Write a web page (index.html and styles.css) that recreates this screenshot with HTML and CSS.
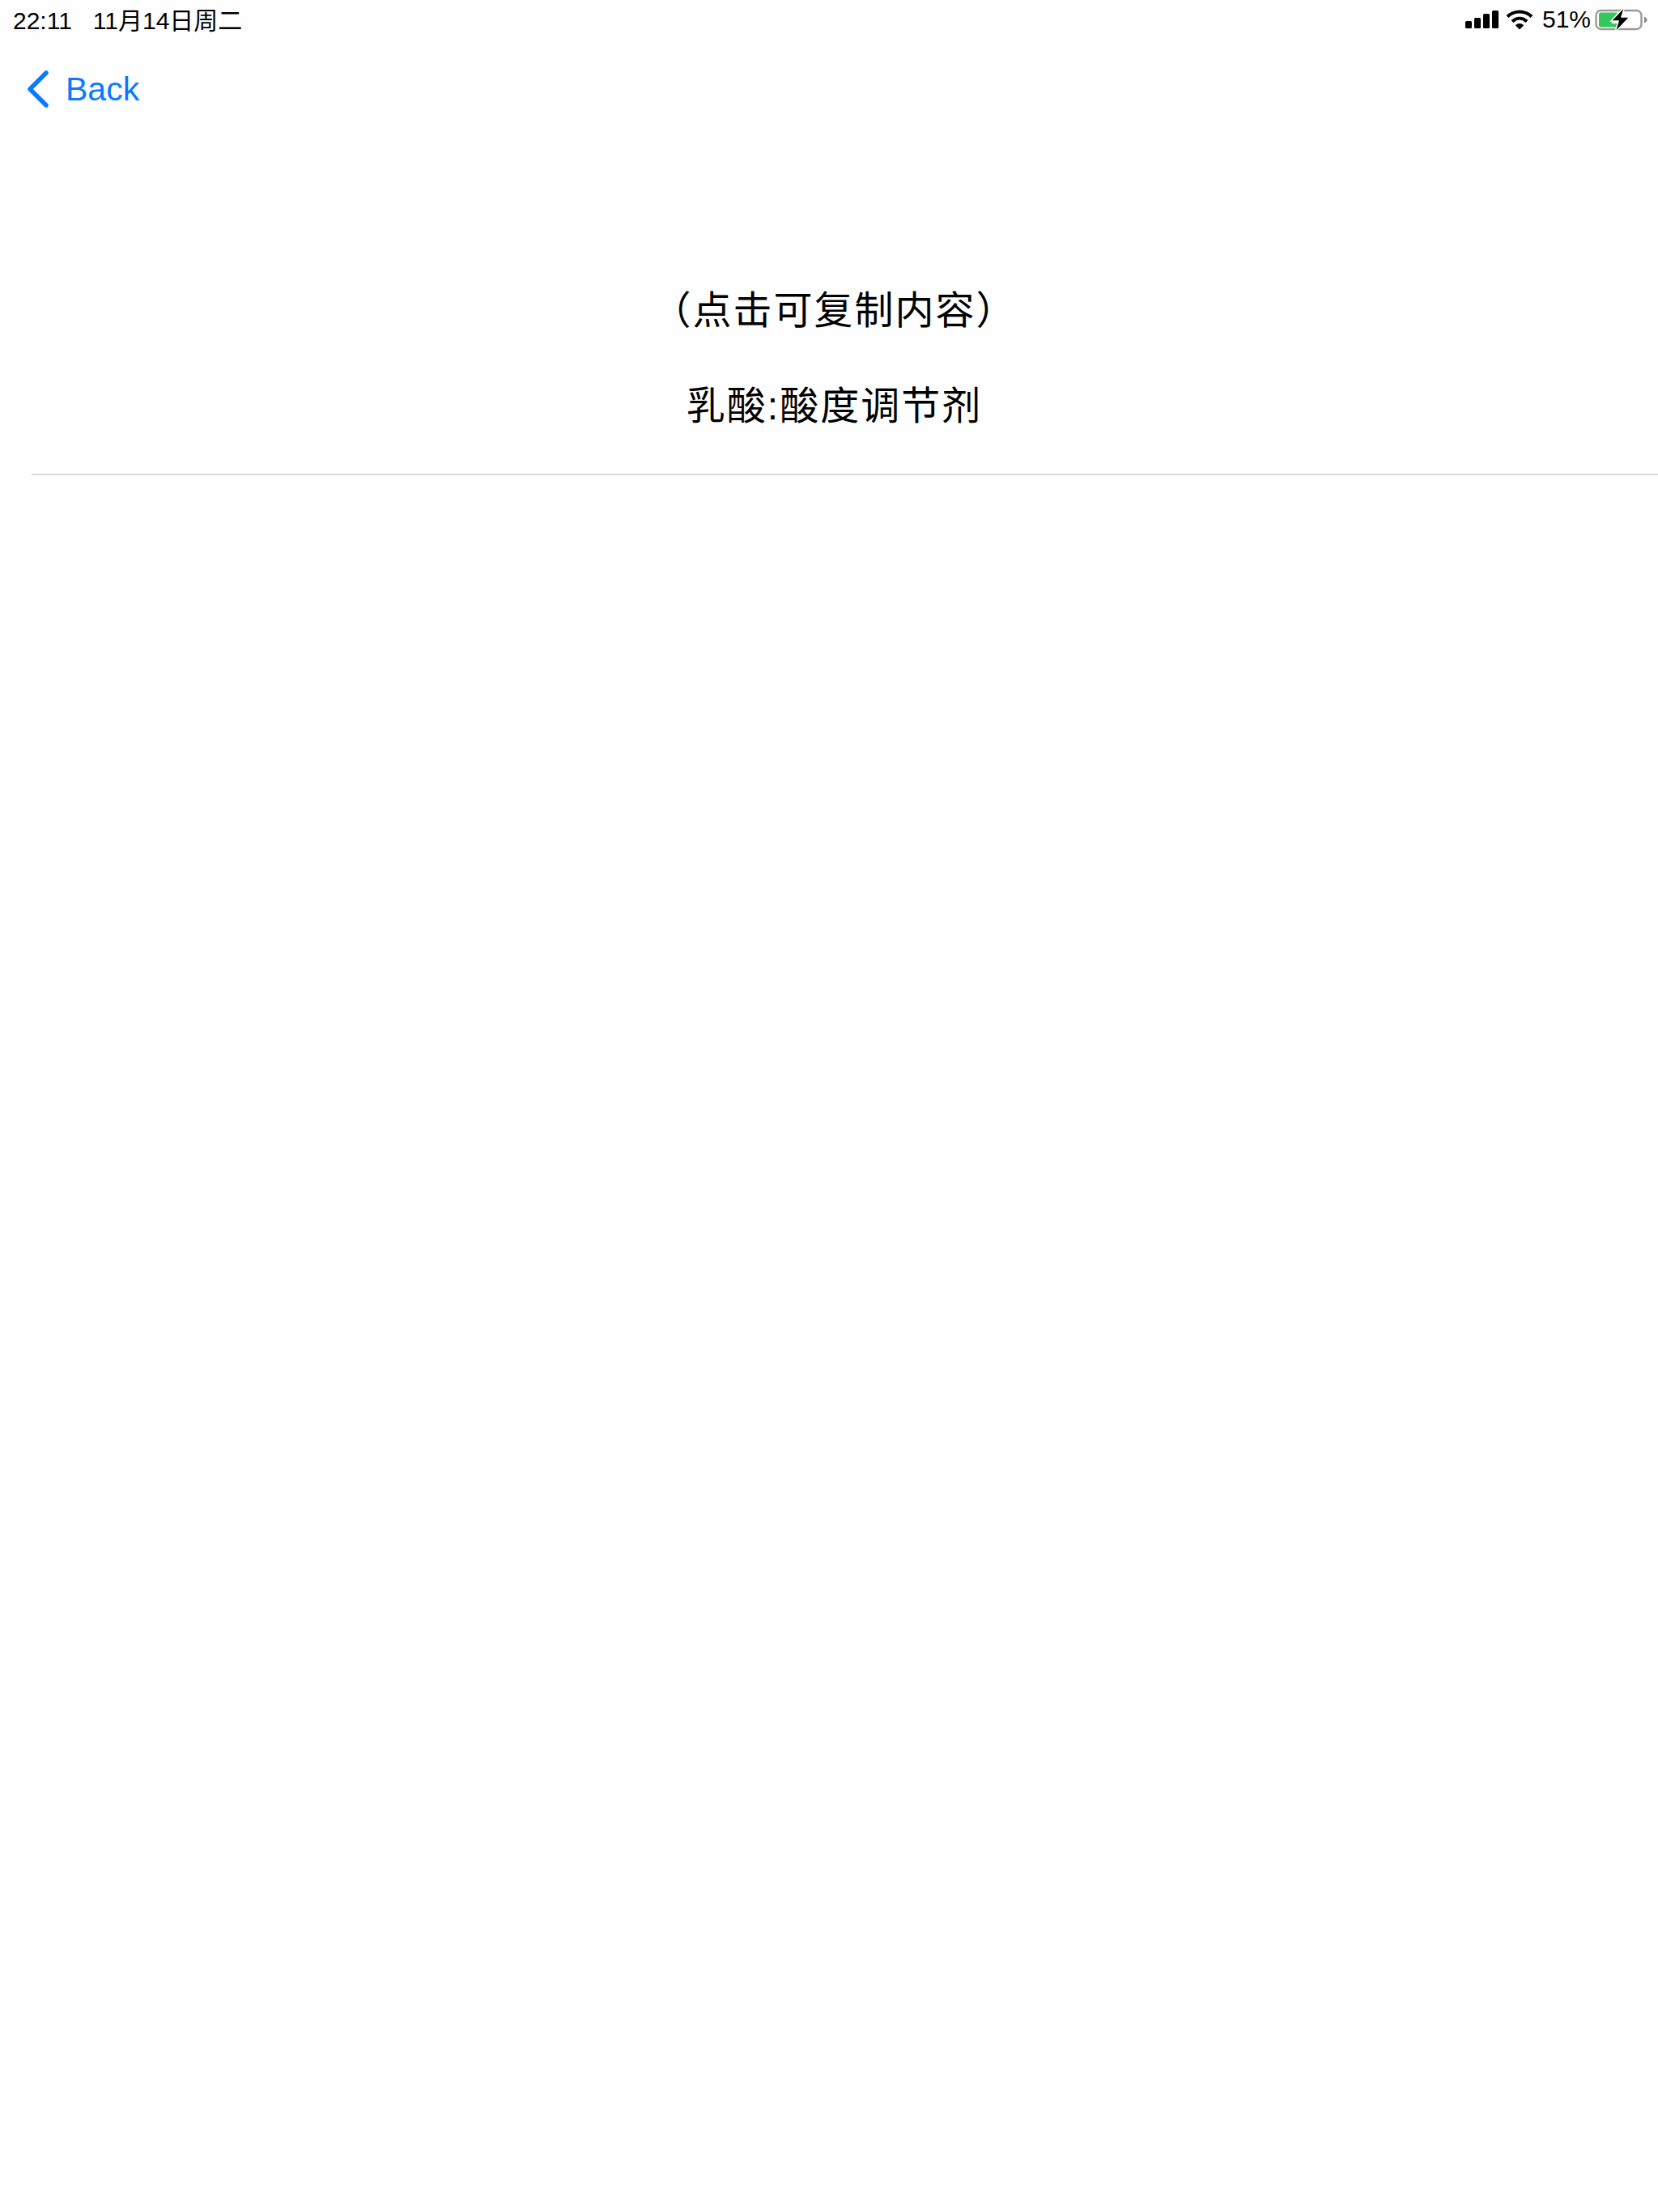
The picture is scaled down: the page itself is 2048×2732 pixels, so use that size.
FILE: index.html
```html
<!DOCTYPE html>
<html lang="zh">
<head>
    <meta charset="UTF-8">
    <title>内容</title>
    <link rel="stylesheet" href="styles.css">
</head>
<body>

<div class="status-bar">
    <div class="status-left">
        <span>22:11</span>
        <span>11月14日周二</span>
    </div>
    <div class="status-right">
        <svg class="signal" width="42" height="22" viewBox="0 0 42 22">
            <rect x="0" y="13" width="8" height="9" rx="1.5"/>
            <rect x="11" y="9" width="8" height="13" rx="1.5"/>
            <rect x="22" y="4" width="8" height="18" rx="1.5"/>
            <rect x="33" y="0" width="8" height="22" rx="1.5"/>
        </svg>
        <svg class="wifi" width="34" height="26" viewBox="0 0 34 26">
            <path d="M2 9.500C10.500 1.500 23.500 1.500 32 9.500" fill="none" stroke="#000" stroke-width="4.200"/>
            <path d="M8 15.500C13.500 10.500 20.500 10.500 26 15.500" fill="none" stroke="#000" stroke-width="4.200"/>
            <path d="M11.800 20.300C15 17.300 19 17.300 22.200 20.300L17 25.500Z"/>
        </svg>
        <span class="battery-text">51%</span>
        <svg class="battery" width="66" height="32" viewBox="0 0 66 32">
            <rect x="1.500" y="5" width="56" height="23" rx="6" fill="none" stroke="#9a9a9a" stroke-width="2.400"/>
            <path d="M5 9.500a2 2 0 0 1 2-2H28L20 21H28V25.500H7a2 2 0 0 1-2-2Z" fill="#34c759"/>
            <path d="M61 12.500C63.500 13.500 64.500 15 64.500 16.500S63.500 19.500 61 20.500Z" fill="#8a8a8a"/>
            <path d="M37 0L20 18H29L25 32L43 13H33Z" stroke="#fff" stroke-width="1.500"/>
        </svg>
    </div>
</div>

<div class="nav-bar">
    <svg class="back-icon" width="30" height="48" viewBox="0 0 30 48">
        <path d="M26 4L6 24L26 44" fill="none" stroke="#0a7aff" stroke-width="5.500" stroke-linecap="round" stroke-linejoin="round"/>
    </svg>
    <span class="back-text">Back</span>
</div>

<div class="content">
    <p class="hint">（点击可复制内容）</p>
    <p class="result">乳酸:酸度调节剂</p>
</div>

</body>
</html>
```

FILE: styles.css
```css
html, body { margin: 0; padding: 0; }
body { width: 2048px; height: 2732px; overflow: hidden; background-color: #fefefe; color: #000; font-family: "Liberation Sans", "Noto Sans CJK SC", sans-serif; }
.status-bar { display: flex; justify-content: space-between; align-items: center; height: 48px; padding: 0 12px 0 16px; font-size: 30px; }
.status-left { display: flex; align-items: baseline; gap: 26px; padding-bottom: 3px; }
.status-right { display: flex; align-items: center; gap: 8px; }
.wifi { margin-right: 3px; }
.battery { margin-left: -3px; }
.nav-bar { display: flex; align-items: center; gap: 20px; height: 60px; margin-top: 32px; padding-left: 31px; color: #0a7aff; font-size: 41px; }
.content { margin-top: 214px; margin-left: 39px; height: 231px; border-bottom: 2px solid #d9d9d9; padding-right: 26px; text-align: center; }
.hint, .result { margin: 0; font-size: 48px; letter-spacing: 2px; line-height: 60px; }
.result { margin-top: 58px; }
```
